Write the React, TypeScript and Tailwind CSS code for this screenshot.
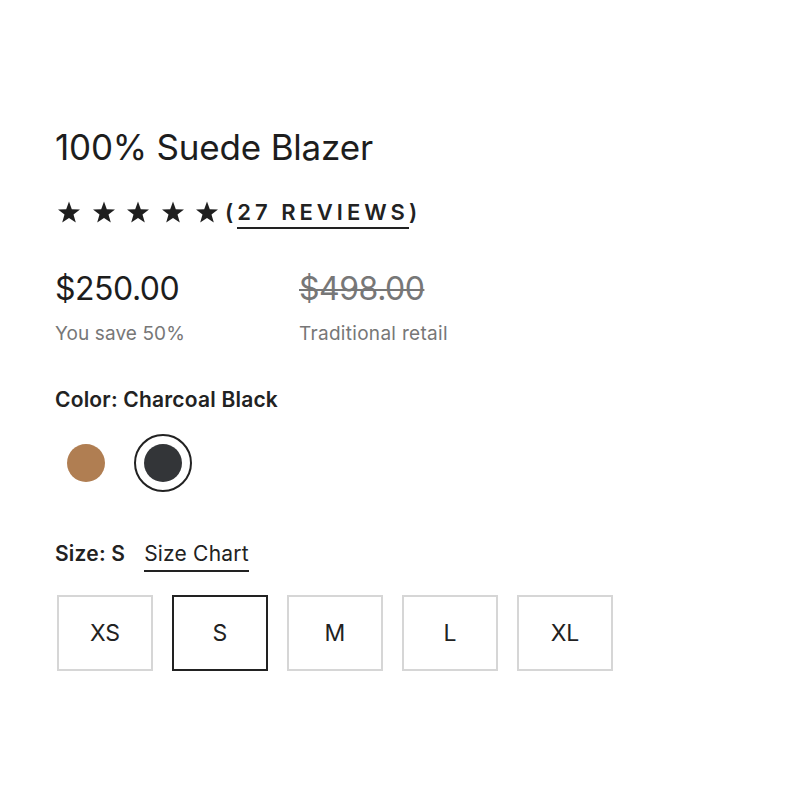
import React from "react";

const Star = () => (
  <svg width="24" height="23" viewBox="0 0 24 23" className="block">
    <path
      d="M12 0.6 L14.8 8.3 L23 8.5 L16.5 13.6 L18.8 21.6 L12 16.9 L5.2 21.6 L7.5 13.6 L1 8.5 L9.2 8.3 Z"
      fill="#1f1f1f"
    />
  </svg>
);

export default function App() {
  const sizes = ["XS", "S", "M", "L", "XL"];
  return (
    <div
      className="w-[800px] h-[800px] bg-white text-[#222]"
      style={{ fontFamily: "Inter, 'Noto Sans', sans-serif" }}
    >
      <div className="pl-[55px] pt-[125px]">
        <h1 className="text-[35px] leading-[44px] font-normal tracking-[-0.2px] text-[#1d1d1d]">
          100% Suede Blazer
        </h1>
        <div className="mt-[28px] flex items-center h-[30px]">
          <div className="flex gap-[10.5px] ml-[2px]">
            <Star />
            <Star />
            <Star />
            <Star />
            <Star />
          </div>
          <div className="ml-[6px] text-[22px] font-semibold tracking-[4px] text-[#222] flex relative top-[2px]">
            <span className="leading-[26px]">(</span>
            <span className="border-b-2 border-[#222] pb-[2px] leading-[26px]">27 REVIEWS</span>
            <span className="leading-[26px]">)</span>
          </div>
        </div>
        <div className="mt-[42px] flex">
          <div className="w-[244px]">
            <div className="text-[32px] leading-[40px] text-[#1d1d1d] tracking-[-0.5px]">$250.00</div>
            <div className="mt-[13px] text-[19px] leading-[24px] text-[#777] tracking-[0.1px]">You save 50%</div>
          </div>
          <div>
            <div className="text-[32px] leading-[40px] text-[#777] line-through decoration-[2px] tracking-[-0.5px]">$498.00</div>
            <div className="mt-[13px] text-[19px] leading-[24px] text-[#777] tracking-[0.3px]">Traditional retail</div>
          </div>
        </div>
        <div className="mt-[40px] text-[21px] leading-[28px] font-semibold text-[#222] tracking-[0.2px]">
          Color: Charcoal Black
        </div>
        <div className="mt-[20px] flex items-center gap-[19px] ml-[2px]">
          <div className="w-[58px] h-[58px] flex items-center justify-center">
            <div className="w-[38px] h-[38px] rounded-full bg-[#b07e52]" />
          </div>
          <div className="w-[58px] h-[58px] rounded-full border-2 border-[#222] flex items-center justify-center">
            <div className="w-[38px] h-[38px] rounded-full bg-[#333538]" />
          </div>
        </div>
        <div className="mt-[48px] flex items-start text-[21px] leading-[28px] text-[#222] tracking-[0.2px]">
          <span className="font-semibold">Size: S</span>
          <span className="ml-[19px] border-b-2 border-[#222] pb-[2px]">Size Chart</span>
        </div>
        <div className="mt-[23px] flex gap-[19px] ml-[2px]">
          {sizes.map((s) => (
            <div
              key={s}
              className={
                s === "S"
                  ? "w-[96px] h-[76px] border-2 border-[#222] flex items-center justify-center text-[23px] text-[#222]"
                  : "w-[96px] h-[76px] border-2 border-[#d6d6d6] flex items-center justify-center text-[23px] text-[#222]"
              }
            >
              {s}
            </div>
          ))}
        </div>
      </div>
    </div>
  );
}
